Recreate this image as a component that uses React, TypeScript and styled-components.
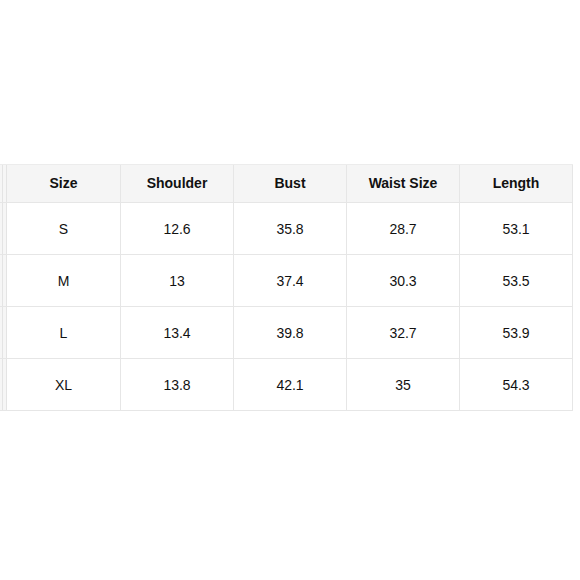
import styled, { createGlobalStyle } from "styled-components"

const GlobalStyle = createGlobalStyle`
  body {
    margin: 0;
    background: #ffffff;
    font-family: "Liberation Sans", Arial, Helvetica, sans-serif;
    color: #111111;
  }
`

const Page = styled.div`
  width: 580px;
  height: 580px;
  padding-top: 164px;
  box-sizing: border-box;
  overflow: hidden;
`

const Table = styled.div`
  display: flex;
  flex-direction: column;
  width: 573px;
`

const Row = styled.div<{ $head?: boolean }>`
  display: grid;
  grid-template-columns: 7px 114px 113px 113px 113px 113px;
  height: ${(p) => (p.$head ? "39px" : "52px")};
  background: ${(p) => (p.$head ? "#f5f5f5" : "#ffffff")};
  border-bottom: 1px solid #e6e6e6;
  box-sizing: border-box;
  &:first-child {
    border-top: 1px solid #ececec;
  }
`

const Stub = styled.div`
  background: linear-gradient(to right, #f6f6f6 0 2px, #e4e4e4 2px 3px, #f6f6f6 3px);
  border-right: 1px solid #e4e4e4;
`

const Cell = styled.div<{ $head?: boolean }>`
  display: flex;
  align-items: center;
  justify-content: center;
  padding-bottom: ${(p) => (p.$head ? "2px" : "0")};
  padding-top: ${(p) => (p.$head ? "0" : "1px")};
  border-right: 1px solid #e6e6e6;
  font-size: 14px;
  font-weight: ${(p) => (p.$head ? 700 : 400)};
  color: #111111;
`

const headers = ["Size", "Shoulder", "Bust", "Waist Size", "Length"]

const rows = [
  ["S", "12.6", "35.8", "28.7", "53.1"],
  ["M", "13", "37.4", "30.3", "53.5"],
  ["L", "13.4", "39.8", "32.7", "53.9"],
  ["XL", "13.8", "42.1", "35", "54.3"],
]

export default function App() {
  return (
    <>
      <GlobalStyle />
      <Page>
        <Table>
          <Row $head>
            <Stub />
            {headers.map((h) => (
              <Cell $head key={h}>{h}</Cell>
            ))}
          </Row>
          {rows.map((r) => (
            <Row key={r[0]}>
              <Stub />
              {r.map((v, i) => (
                <Cell key={i}>{v}</Cell>
              ))}
            </Row>
          ))}
        </Table>
      </Page>
    </>
  )
}
